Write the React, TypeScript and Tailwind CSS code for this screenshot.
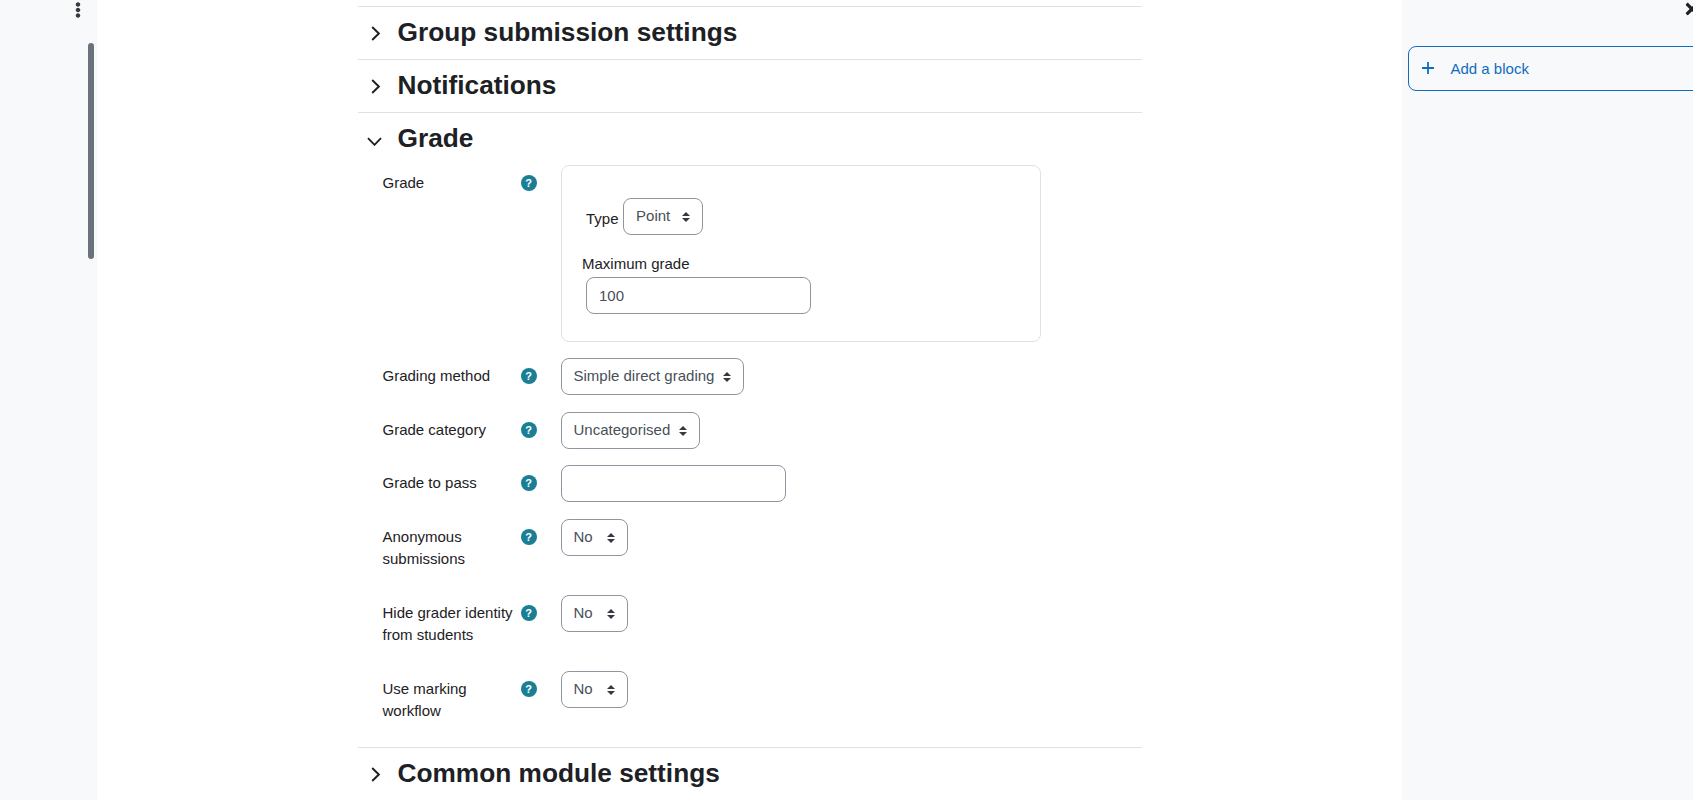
import { FaEllipsisV, FaTimes } from 'react-icons/fa'

const fieldBorder = 'border border-[#8f959e] rounded-lg'

function Chevron({ open = false }: { open?: boolean }) {
  if (open) {
    return (
      <svg width="15" height="9" viewBox="0 0 15 9" fill="none" className="ml-[9.5px] mt-[4px]">
        <path d="M1 1.2 7.5 7.8 14 1.2" stroke="#1d2125" strokeWidth="1.9" />
      </svg>
    )
  }
  return (
    <svg width="9" height="15" viewBox="0 0 9 15" fill="none" className="ml-[13px]">
      <path d="M1.2 1 7.8 7.5 1.2 14" stroke="#1d2125" strokeWidth="1.9" />
    </svg>
  )
}

function SectionHead({ title, open }: { title: string; open?: boolean }) {
  return (
    <div className="flex h-[53px] items-center border-t border-[#dee2e6]">
      <div className="w-[40px]">
        <Chevron open={open} />
      </div>
      <h3 className="-mt-[2px] text-[26.25px] leading-[34px] font-bold text-[#1d2125]">{title}</h3>
    </div>
  )
}

function Select({ value, className = '' }: { value: string; className?: string }) {
  return (
    <div className={`relative flex h-[36.5px] items-center pl-3 text-[#495057] ${fieldBorder} ${className}`}>
      <span>{value}</span>
      <svg width="8" height="10" viewBox="0 0 4 5" className="absolute right-3 top-[13px]">
        <path d="M2 0 0 2h4zm0 5L0 3h4z" fill="#343a40" />
      </svg>
    </div>
  )
}

function Row({ label, height, children }: { label: string; height: string; children: React.ReactNode }) {
  return (
    <div className={`flex pl-[25px] ${height}`}>
      <div className="w-[138px] pt-[7px] leading-[22px]">{label}</div>
      <div className="w-[40px] pt-[10px]">
        <div className="flex size-4 items-center justify-center rounded-full bg-[#1a7f95] text-[11px] leading-none font-bold text-white">
          ?
        </div>
      </div>
      <div>{children}</div>
    </div>
  )
}

export default function App() {
  return (
    <div className="flex h-[800px] overflow-hidden bg-white font-['Liberation_Sans',Arial,sans-serif] text-[15px] leading-[22px] text-[#1d2125]">
      {/* course index drawer */}
      <aside className="relative w-[97px] shrink-0 bg-[#f8f9fa]">
        <div className="flex justify-end pr-[11px] pt-[2px]">
          <FaEllipsisV size={16} color="#343a40" />
        </div>
        <div className="absolute left-[88px] top-[43px] h-[216px] w-[6px] rounded-[3px] bg-[#6a737b]" />
      </aside>

      <main className="flex-1 pt-[6px]">
        <div className="mx-auto w-[784px]">
          <SectionHead title="Group submission settings" />
          <SectionHead title="Notifications" />
          <SectionHead title="Grade" open />

          <Row label="Grade" height="h-[193px]">
            <div className="h-[177px] w-[480px] rounded-lg border border-[#dee2e6] pl-[20.5px]">
              <div className="flex items-start pt-[32px] pl-[4px]">
                <span className="pt-[10px]">Type</span>
                <Select value="Point" className="ml-[4.5px] w-[79.5px]" />
              </div>
              <div className="pt-[18px] leading-[22px]">Maximum grade</div>
              <input
                defaultValue="100"
                className={`mt-[2.5px] ml-[4px] h-[36.5px] w-[225px] px-3 text-[#495057] outline-none ${fieldBorder}`}
              />
            </div>
          </Row>
          <Row label="Grading method" height="h-[54px]">
            <Select value="Simple direct grading" className="w-[183px]" />
          </Row>
          <Row label="Grade category" height="h-[53px]">
            <Select value="Uncategorised" className="w-[139px]" />
          </Row>
          <Row label="Grade to pass" height="h-[54px]">
            <input className={`h-[36.5px] w-[225px] px-3 outline-none ${fieldBorder}`} />
          </Row>
          <Row label="Anonymous submissions" height="h-[76px]">
            <Select value="No" className="w-[67px]" />
          </Row>
          <Row label="Hide grader identity from students" height="h-[76px]">
            <Select value="No" className="w-[67px]" />
          </Row>
          <Row label="Use marking workflow" height="h-[76px]">
            <Select value="No" className="w-[67px]" />
          </Row>
          <SectionHead title="Common module settings" />
        </div>
      </main>

      {/* block drawer */}
      <aside className="relative w-[291px] shrink-0 overflow-hidden bg-[#f8f9fa] pl-[6px] pt-[46px]">
        <div className="absolute left-[281px] top-0">
          <FaTimes size={18} color="#1d2125" />
        </div>
        <div className="flex h-[44.5px] w-[320px] items-center gap-[16.5px] rounded-lg border border-[#0f6cbf] pl-[13px] text-[#0f6cbf]">
          <svg width="12" height="12" viewBox="0 0 12 12" fill="none">
            <path d="M6 0v12M0 6h12" stroke="#0f6cbf" strokeWidth="1.8" />
          </svg>
          <span className="pt-[1px]">Add a block</span>
        </div>
      </aside>
    </div>
  )
}
